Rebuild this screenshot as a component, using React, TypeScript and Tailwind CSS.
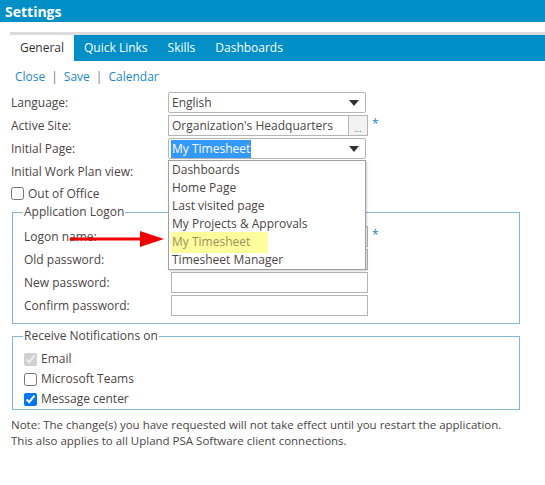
import React from 'react';

const font = { fontFamily: '"Open Sans", "Liberation Sans", sans-serif' };

function Select({ value, selected }: { value: string; selected?: boolean }) {
  return (
    <div className="relative flex h-[21px] w-[198px] items-center border border-[#b5b5b5] rounded-[2px] bg-white pl-[2px]">
      <span className={selected ? 'bg-[#3399ff] px-[1px] text-white leading-[18px]' : 'px-[1px]'}>{value}</span>
      <span className="absolute right-[6px] top-[7px] h-0 w-0 border-x-[5px] border-t-[6px] border-x-transparent border-t-[#333]" />
    </div>
  );
}

function Field() {
  return <div className="h-[21px] w-[197px] border border-[#b5b5b5] bg-white" />;
}

function Row({ label, children, w = 'w-[157px]' }: { label: string; children?: React.ReactNode; w?: string }) {
  return (
    <div className="flex h-[23px] items-center">
      <div className={`${w} shrink-0`}>{label}</div>
      {children}
    </div>
  );
}

function Check({ label, checked, disabled }: { label: string; checked?: boolean; disabled?: boolean }) {
  return (
    <label className="flex h-[20px] items-center gap-[4px]">
      <input type="checkbox" defaultChecked={checked} disabled={disabled} className="m-0 h-[13px] w-[13px]" />
      <span>{label}</span>
    </label>
  );
}

export default function App() {
  const tabs = ['Quick Links', 'Skills', 'Dashboards'];
  const options = ['Dashboards', 'Home Page', 'Last visited page', 'My Projects & Approvals', 'My Timesheet', 'Timesheet Manager'];

  return (
    <div className="relative h-[485px] w-[545px] overflow-hidden bg-white text-[12px] text-[#4b4646]" style={font}>
      <div className="flex h-[22px] items-center bg-[#008fc7] px-[5px] text-[14px] font-bold text-white">Settings</div>

      <div className="pl-[10px] pt-[10px]">
        <div className="h-[3px] bg-[#dcdcdc]" />
        <div className="flex h-[26px] items-center bg-[#008fc7] text-[12px] text-white">
          <div className="flex h-full w-[64px] items-center justify-center bg-white text-[#333]">General</div>
          {tabs.map((t) => (
            <div key={t} className="px-[10px]">{t}</div>
          ))}
        </div>
      </div>

      <div className="flex h-[30px] items-center gap-[6px] pl-[15px] pt-[2px] text-[#1a8ac6]">
        <span>Close</span><span className="text-[#777]">|</span>
        <span>Save</span><span className="text-[#777]">|</span>
        <span>Calendar</span>
      </div>

      <div className="pl-[11px]">
        <Row label="Language:">
          <Select value="English" />
        </Row>
        <Row label="Active Site:">
          <div className="flex h-[21px]">
            <div className="flex w-[181px] items-center border border-[#b5b5b5] bg-white pl-[3px]">Organization's Headquarters</div>
            <div className="flex w-[19px] items-end justify-center border border-l-0 border-[#b5b5b5] bg-[#f2f2f2] pb-[2px] text-[9px] leading-none text-[#4a6a8a]">...</div>
          </div>
          <span className="ml-[4px] self-start pt-[1px] text-[#1a8ac6]">*</span>
        </Row>
        <Row label="Initial Page:">
          <Select value="My Timesheet" selected />
        </Row>
        <Row label="Initial Work Plan view:" />
        <div className="flex h-[21px] items-center">
          <Check label="Out of Office" />
        </div>
      </div>

      <fieldset className="ml-[12px] mr-[25px] mt-[1px] h-[119px] border border-[#86b6d2] px-[11px] pb-0 pt-[2px]">
        <legend className="ml-[-1px] px-[1px] leading-[14px]">Application Logon</legend>
        <div className="mt-[4px]">
          <Row label="Logon name:" w="w-[147px]">
            <div className="h-[21px] w-[197px] border border-[#b5b5b5] bg-white" />
            <span className="ml-[4px] self-start pt-[1px] text-[#1a8ac6]">*</span>
          </Row>
          <Row label="Old password:" w="w-[147px]">
            <Field />
          </Row>
          <Row label="New password:" w="w-[147px]">
            <Field />
          </Row>
          <Row label="Confirm password:" w="w-[147px]">
            <Field />
          </Row>
        </div>
      </fieldset>

      <fieldset className="ml-[12px] mr-[25px] mt-[5px] h-[81px] border border-[#86b6d2] px-[11px] pt-[2px]">
        <legend className="ml-[-1px] px-[1px] leading-[14px]">Receive Notifications on</legend>
        <div className="mt-[4px]">
          <Check label="Email" checked disabled />
          <Check label="Microsoft Teams" />
          <Check label="Message center" checked />
        </div>
      </fieldset>

      <div className="mt-[7px] pl-[11px] text-[11.5px] leading-[16px]">
        <div>Note: The change(s) you have requested will not take effect until you restart the application.</div>
        <div>This also applies to all Upland PSA Software client connections.</div>
      </div>

      {/* open dropdown of Initial Page */}
      <div className="absolute left-[168px] top-[160px] w-[198px] border border-[#a0a0a0] bg-white shadow-[1px_1px_2px_rgba(0,0,0,0.2)]">
        {options.map((o) => (
          <div key={o} className="flex h-[18px] items-center pl-[3px]">
            {o === 'My Timesheet' ? (
              <span className="-ml-[1px] flex h-[21px] w-[97px] items-center bg-[#fdfd9c] pl-[1px] text-[#9b9160]">{o}</span>
            ) : (
              o
            )}
          </div>
        ))}
      </div>

      {/* red arrow annotation */}
      <svg className="absolute left-[68px] top-[229px]" width="98" height="20" viewBox="0 0 98 20">
        <line x1="2" y1="10" x2="74" y2="10" stroke="#f00000" strokeWidth="3" />
        <polygon points="72,2 96,10 72,18" fill="#f00000" />
      </svg>
    </div>
  );
}
